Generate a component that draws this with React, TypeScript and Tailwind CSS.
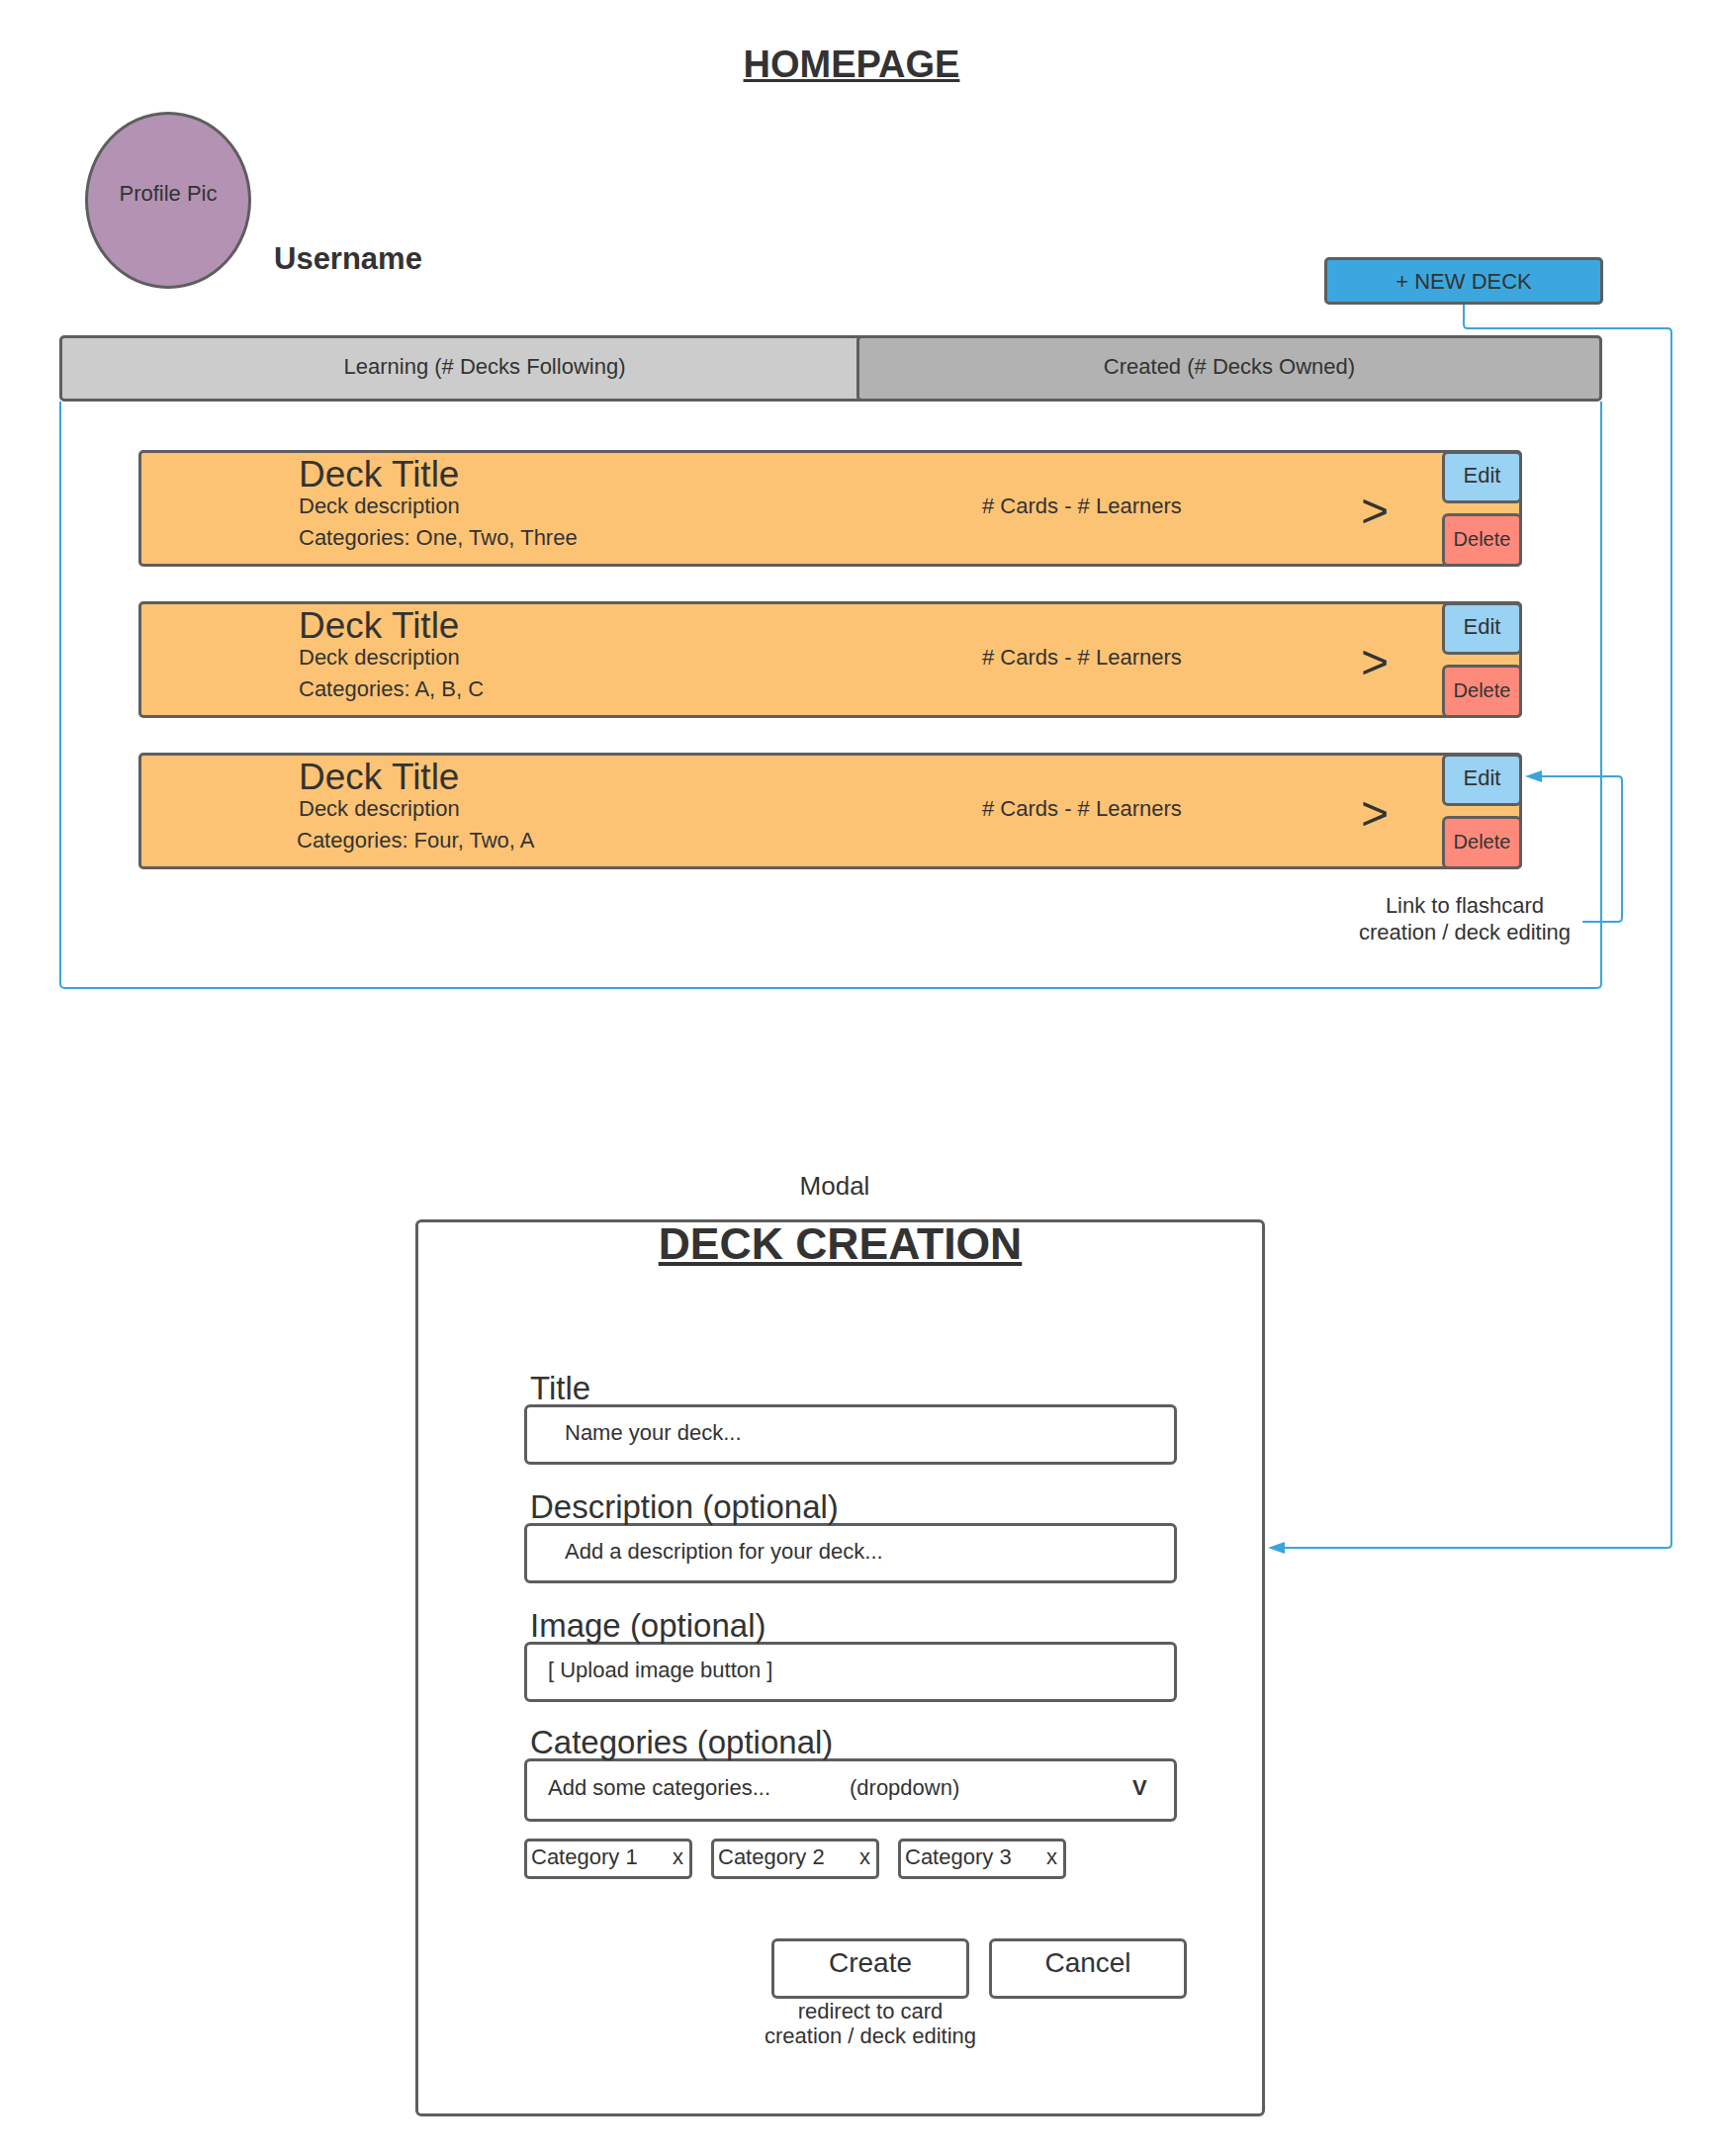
import React from "react";

function DeckCard({ categories, shift }: { categories: string; shift?: boolean }) {
  return (
    <div className="flex h-[118px] w-[1399px] rounded-[5px] border-[3px] border-[#5e5e5e] bg-[#fdc374]">
      <div className="w-[850px] shrink-0 pl-[159px] pt-[3px]">
        <div className="whitespace-nowrap text-[37px] leading-[37px]">Deck Title</div>
        <div className="whitespace-nowrap text-[22px] leading-[27px]">Deck description</div>
        <div className={shift ? "-ml-[2px] whitespace-nowrap text-[22px] leading-[37px]" : "whitespace-nowrap text-[22px] leading-[37px]"}>
          {categories}
        </div>
      </div>
      <div className="w-[383px] shrink-0 whitespace-nowrap pt-[40px] text-[22px] leading-[27px]"># Cards - # Learners</div>
      <div className="flex-1 pt-[35px] text-[48px] leading-[48px]">&gt;</div>
      <div className="-my-[3px] -mr-[3px] flex w-[81px] shrink-0 flex-col gap-[10px] pt-[1px]">
        <div className="flex h-[53px] items-center justify-center rounded-[6px] border-[3px] border-[#5e5e5e] bg-[#9ad2f3] pb-[4px] text-[22px]">
          Edit
        </div>
        <div className="flex flex-1 items-center justify-center rounded-[6px] border-[3px] border-[#5e5e5e] bg-[#fe8a7c] pb-[3px] text-[20px]">
          Delete
        </div>
      </div>
    </div>
  );
}

function Field({
  label,
  text,
  pad,
  labelGap,
  tall,
}: {
  label: string;
  text: React.ReactNode;
  pad: "wide" | "narrow";
  labelGap: "a" | "b";
  tall?: boolean;
}) {
  return (
    <div className={labelGap === "a" ? "mt-[27px]" : "mt-[25px]"}>
      <div className="pl-[6px] text-[33px] leading-[32px] whitespace-nowrap">{label}</div>
      <div
        className={
          (tall ? "h-[64px] pb-[6px] " : "h-[61px] pb-[5px] ") +
          (pad === "wide" ? "pl-[38px] " : "pl-[21px] ") +
          "flex w-[660px] items-center rounded-[6px] border-[3px] border-[#5e5e5e] text-[22px] whitespace-nowrap"
        }
      >
        {text}
      </div>
    </div>
  );
}

function Chip({ label }: { label: string }) {
  return (
    <div className="flex h-[41px] w-[170px] items-center justify-between rounded-[5px] border-[3px] border-[#5e5e5e] pb-[4px] pl-[4px] pr-[6px] text-[22px]">
      <span>{label}</span>
      <span>x</span>
    </div>
  );
}

export default function App() {
  return (
    <div className="relative h-[2180px] w-[1730px] overflow-hidden bg-white font-['Liberation_Sans',Arial,sans-serif] text-[#333333]">
      {/* Title */}
      <div className="flex justify-center pr-[8px] pt-[45px]">
        <div className="text-[38px] font-bold leading-[41px] underline decoration-[3px] underline-offset-[2px]">HOMEPAGE</div>
      </div>

      {/* Profile row */}
      <div className="mt-[27px] flex items-start">
        <div className="ml-[86px] flex h-[179px] w-[168px] shrink-0 items-center justify-center rounded-[50%] border-[3px] border-[#5e5e5e] bg-[#b492b4] pb-[14px] text-[22px]">
          Profile Pic
        </div>
        <div className="ml-[23px] mt-[132px] text-[31px] font-bold leading-[34px]">Username</div>
        <div className="ml-auto mr-[109px] mt-[147px] flex h-[48px] w-[282px] items-center justify-center rounded-[5px] border-[3px] border-[#5e5e5e] bg-[#3ca7de] text-[22px]">
          + NEW DECK
        </div>
      </div>

      {/* Tabs */}
      <div className="ml-[60px] mt-[31px] flex h-[67px] w-[1560px]">
        <div className="flex w-[860px] shrink-0 items-center justify-center rounded-[5px] border-[3px] border-[#5e5e5e] bg-[#cccccc] pb-[4px] text-[22px]">
          Learning (# Decks Following)
        </div>
        <div className="relative z-10 -ml-[54px] flex flex-1 items-center justify-center rounded-[5px] border-[3px] border-[#5e5e5e] bg-[#b2b2b2] pb-[4px] text-[22px]">
          Created (# Decks Owned)
        </div>
      </div>

      {/* Content box */}
      <div className="ml-[60px] flex h-[594px] w-[1560px] flex-col rounded-b-[5px] border-x-2 border-b-2 border-[#3aa5dd] pl-[78px] pt-[49px]">
        <div className="flex flex-col gap-[35px]">
          <DeckCard categories="Categories: One, Two, Three" />
          <DeckCard categories="Categories: A, B, C" />
          <DeckCard categories="Categories: Four, Two, A" shift />
        </div>
        <div className="mt-[23px] flex justify-end pr-[30px]">
          <div className="text-center text-[22px] leading-[27px] whitespace-nowrap">
            Link to flashcard
            <br />
            creation / deck editing
          </div>
        </div>
      </div>

      {/* Modal */}
      <div className="ml-[420px] mt-[184px] w-[859px]">
        <div className="pr-[11px] text-center text-[26px] leading-[30px]">Modal</div>
        <div className="mt-[19px] h-[907px] rounded-[6px] border-[3px] border-[#5e5e5e]">
          <div className="text-center text-[44.5px] font-bold leading-[44px] underline decoration-[4px] underline-offset-[3px]">
            DECK CREATION
          </div>
          <div className="pl-[107px]">
            <div className="mt-[108px]">
              <div className="pl-[6px] text-[33px] leading-[32px]">Title</div>
              <div className="flex h-[61px] w-[660px] items-center rounded-[6px] border-[3px] border-[#5e5e5e] pb-[5px] pl-[38px] text-[22px]">
                Name your deck...
              </div>
            </div>
            <Field label="Description (optional)" text="Add a description for your deck..." pad="wide" labelGap="a" />
            <Field label="Image (optional)" text="[ Upload image button ]" pad="narrow" labelGap="a" />
            <Field
              label="Categories (optional)"
              pad="narrow"
              labelGap="b"
              tall
              text={
                <>
                  <span className="w-[305px] shrink-0">Add some categories...</span>
                  <span className="w-[286px] shrink-0">(dropdown)</span>
                  <span className="font-bold">V</span>
                </>
              }
            />
            <div className="mt-[17px] flex gap-[19px]">
              <Chip label="Category 1" />
              <Chip label="Category 2" />
              <Chip label="Category 3" />
            </div>
            <div className="mt-[60px] flex gap-[20px] pl-[250px]">
              <div className="flex w-[200px] flex-col">
                <div className="flex h-[61px] justify-center rounded-[6px] border-[3px] border-[#5e5e5e] pt-[8px] text-[28px] leading-[28px]">
                  Create
                </div>
                <div className="flex justify-center">
                  <div className="text-center text-[22px] leading-[25px] whitespace-nowrap">
                    redirect to card
                    <br />
                    creation / deck editing
                  </div>
                </div>
              </div>
              <div className="flex h-[61px] w-[200px] justify-center rounded-[6px] border-[3px] border-[#5e5e5e] pt-[8px] text-[28px] leading-[28px]">
                Cancel
              </div>
            </div>
          </div>
        </div>
      </div>

      {/* Connectors */}
      <svg className="pointer-events-none absolute left-0 top-0" width="1730" height="2180" viewBox="0 0 1730 2180">
        <path
          d="M1480 308 V328 Q1480 332 1484 332 H1686 Q1690 332 1690 336 V1561 Q1690 1565 1686 1565 H1296"
          fill="none"
          stroke="#3aa5dd"
          strokeWidth="2"
        />
        <polygon points="1282,1565 1299,1559 1299,1571" fill="#3aa5dd" />
        <path
          d="M1600 932 H1636 Q1640 932 1640 928 V789 Q1640 785 1636 785 H1556"
          fill="none"
          stroke="#3aa5dd"
          strokeWidth="2"
        />
        <polygon points="1542,785 1559,779 1559,791" fill="#3aa5dd" />
      </svg>
    </div>
  );
}
